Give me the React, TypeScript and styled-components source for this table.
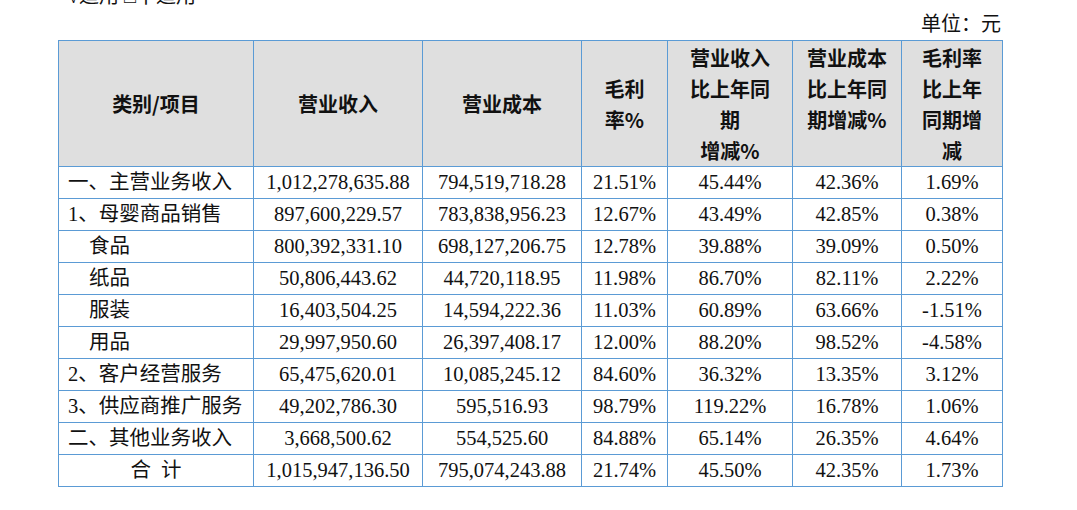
import styled, { createGlobalStyle } from "styled-components";

const GlobalStyle = createGlobalStyle`
  html, body {
    margin: 0;
    padding: 0;
    background: #fff;
  }
  body {
    font-family: "Liberation Serif", "Noto Sans CJK SC", serif;
    color: #111;
  }
`;

const Page = styled.div`
  width: 944px;
  margin-left: 58px;
  display: flex;
  flex-direction: column;
`;

const CutNote = styled.p`
  margin: -16px 0 0 10px;
  font-size: 20px;
  line-height: 24px;
  white-space: pre;
`;

const Unit = styled.p`
  margin: 0;
  text-align: right;
  font-size: 20px;
  line-height: 32px;
  height: 32px;
  padding-right: 1px;
`;

const Table = styled.table`
  border-collapse: collapse;
  table-layout: fixed;
  width: 944px;
  font-size: 20.5px;

  th,
  td {
    border: 1px solid #5b9bd5;
    padding: 0;
    text-align: center;
    white-space: nowrap;
  }
`;

const HeadCell = styled.th`
  height: 125px;
  background: #dfdfdf;
  font-family: "Noto Sans CJK SC", sans-serif;
  font-weight: 700;
  font-size: 20px;
  color: #111;
  vertical-align: middle;
`;

const HeadLine = styled.span`
  display: block;
  height: 31px;
  line-height: 31px;
`;

const Cell = styled.td<{ $align?: "left" | "center"; $indent?: number }>`
  height: 31px;
  line-height: 31px;
  text-align: ${(p) => p.$align ?? "center"} !important;
  padding-left: ${(p) => (p.$align === "left" ? 9 + (p.$indent ?? 0) : 0)}px !important;
  white-space: pre !important;
`;

const widths = [195, 169, 159, 86, 125, 109, 101];

const heads: string[][] = [
  ["类别/项目"],
  ["营业收入"],
  ["营业成本"],
  ["毛利", "率%"],
  ["营业收入", "比上年同", "期", "增减%"],
  ["营业成本", "比上年同", "期增减%", ""],
  ["毛利率", "比上年", "同期增", "减"],
];

type Row = { label: string; indent?: number; center?: boolean; values: string[] };

const rows: Row[] = [
  { label: "一、主营业务收入", values: ["1,012,278,635.88", "794,519,718.28", "21.51%", "45.44%", "42.36%", "1.69%"] },
  { label: "1、母婴商品销售", values: ["897,600,229.57", "783,838,956.23", "12.67%", "43.49%", "42.85%", "0.38%"] },
  { label: "食品", indent: 21, values: ["800,392,331.10", "698,127,206.75", "12.78%", "39.88%", "39.09%", "0.50%"] },
  { label: "纸品", indent: 21, values: ["50,806,443.62", "44,720,118.95", "11.98%", "86.70%", "82.11%", "2.22%"] },
  { label: "服装", indent: 21, values: ["16,403,504.25", "14,594,222.36", "11.03%", "60.89%", "63.66%", "-1.51%"] },
  { label: "用品", indent: 21, values: ["29,997,950.60", "26,397,408.17", "12.00%", "88.20%", "98.52%", "-4.58%"] },
  { label: "2、客户经营服务", values: ["65,475,620.01", "10,085,245.12", "84.60%", "36.32%", "13.35%", "3.12%"] },
  { label: "3、供应商推广服务", values: ["49,202,786.30", "595,516.93", "98.79%", "119.22%", "16.78%", "1.06%"] },
  { label: "二、其他业务收入", values: ["3,668,500.62", "554,525.60", "84.88%", "65.14%", "26.35%", "4.64%"] },
  { label: "合  计", center: true, values: ["1,015,947,136.50", "795,074,243.88", "21.74%", "45.50%", "42.35%", "1.73%"] },
];

function App() {
  return (
    <>
      <GlobalStyle />
      <Page>
        <CutNote>√适用 □不适用</CutNote>
        <Unit>单位：元</Unit>
        <Table>
          <colgroup>
            {widths.map((w, i) => (
              <col key={i} style={{ width: w }} />
            ))}
          </colgroup>
          <thead>
            <tr>
              {heads.map((lines, i) => (
                <HeadCell key={i}>
                  {lines.map((l, j) => (
                    <HeadLine key={j}>{l}</HeadLine>
                  ))}
                </HeadCell>
              ))}
            </tr>
          </thead>
          <tbody>
            {rows.map((r) => (
              <tr key={r.label}>
                <Cell $align={r.center ? "center" : "left"} $indent={r.indent}>
                  {r.label}
                </Cell>
                {r.values.map((v, i) => (
                  <Cell key={i}>{v}</Cell>
                ))}
              </tr>
            ))}
          </tbody>
        </Table>
      </Page>
    </>
  );
}

export default App;
